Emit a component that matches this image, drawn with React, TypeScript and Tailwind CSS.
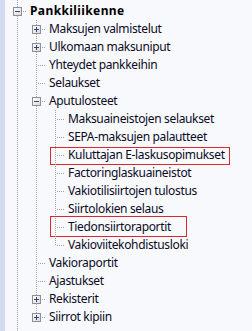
import React from "react";

type Kind = "pipe" | "tee" | "ell" | "blank";
type Row = {
  label: string;
  cells: Kind[];
  box?: "plus" | "minus";
  bold?: boolean;
  mark?: "a" | "b";
};

const rows: Row[] = [
  { label: "Pankkiliikenne", cells: ["tee"], box: "minus", bold: true },
  { label: "Maksujen valmistelut", cells: ["pipe", "tee"], box: "plus" },
  { label: "Ulkomaan maksuniput", cells: ["pipe", "tee"], box: "plus" },
  { label: "Yhteydet pankkeihin", cells: ["pipe", "tee"] },
  { label: "Selaukset", cells: ["pipe", "tee"] },
  { label: "Aputulosteet", cells: ["pipe", "tee"], box: "minus" },
  { label: "Maksuaineistojen selaukset", cells: ["pipe", "pipe", "tee"] },
  { label: "SEPA-maksujen palautteet", cells: ["pipe", "pipe", "tee"] },
  { label: "Kuluttajan E-laskusopimukset", cells: ["pipe", "pipe", "tee"], mark: "a" },
  { label: "Factoringlaskuaineistot", cells: ["pipe", "pipe", "tee"] },
  { label: "Vakiotilisiirtojen tulostus", cells: ["pipe", "pipe", "tee"] },
  { label: "Siirtolokien selaus", cells: ["pipe", "pipe", "tee"] },
  { label: "Tiedonsiirtoraportit", cells: ["pipe", "pipe", "tee"], mark: "b" },
  { label: "Vakioviitekohdistusloki", cells: ["pipe", "pipe", "ell"] },
  { label: "Vakioraportit", cells: ["pipe", "tee"] },
  { label: "Ajastukset", cells: ["pipe", "tee"] },
  { label: "Rekisterit", cells: ["pipe", "tee"], box: "plus" },
  { label: "Siirrot kipiin", cells: ["pipe", "ell"], box: "plus" },
];

const DOT = "#a3a3a3";

function Cell({ kind, box, h = 18 }: { kind: Kind; box?: "plus" | "minus"; h?: number }) {
  return (
    <svg width="19" height={h} className="shrink-0 block" shapeRendering="crispEdges">
      {(kind === "pipe" || kind === "tee") && (
        <line x1="9.5" y1="0" x2="9.5" y2={h} stroke={DOT} strokeDasharray="1 1" />
      )}
      {kind === "ell" && (
        <line x1="9.5" y1="0" x2="9.5" y2="10" stroke={DOT} strokeDasharray="1 1" />
      )}
      {(kind === "tee" || kind === "ell") && (
        <line x1="11" y1="9.5" x2="19" y2="9.5" stroke={DOT} strokeDasharray="1 1" />
      )}
      {box && (
        <g>
          <defs>
            <linearGradient id="bx" x1="0" y1="0" x2="1" y2="1">
              <stop offset="0" stopColor="#ffffff" />
              <stop offset="1" stopColor="#d8d8d8" />
            </linearGradient>
          </defs>
          <rect x="5.5" y="5.5" width="8" height="8" fill="url(#bx)" stroke="#8e8f8f" />
          <line x1="7" y1="9.5" x2="12" y2="9.5" stroke="#2b4a8e" />
          {box === "plus" && <line x1="9.5" y1="7" x2="9.5" y2="12" stroke="#2b4a8e" />}
        </g>
      )}
    </svg>
  );
}

export default function App() {
  return (
    <div
      className="w-[252px] h-[331px] overflow-hidden bg-[#f8f9fd] flex"
      style={{ fontFamily: '"Noto Sans", "Open Sans", sans-serif' }}
    >
      <div className="w-[5px] h-full bg-[#d3daf0] shrink-0" />
      <div className="flex flex-col pl-[3px] flex-1">
        <div className="h-[2px] flex overflow-hidden">
          <Cell kind="pipe" h={2} />
        </div>
        {rows.map((r, i) => (
          <div key={i} className="relative h-[18px] flex items-stretch">
            {r.cells.map((c, j) => (
              <Cell key={j} kind={c} box={j === r.cells.length - 1 ? r.box : undefined} />
            ))}
            <span
              className={
                "pl-[3px] text-[12px] leading-[18px] whitespace-nowrap " +
                (r.bold
                  ? "font-bold text-black tracking-[0.4px]"
                  : "text-[#0b0b1e] tracking-[-0.35px]")
              }
            >
              {r.label}
            </span>
            {r.mark === "a" && (
              <div className="absolute left-[42px] top-[1px] w-[180px] h-[18px] border border-[#e0262b]" />
            )}
            {r.mark === "b" && (
              <div className="absolute left-[42px] top-[-2px] w-[137px] h-[21px] border border-[#e0262b]" />
            )}
          </div>
        ))}
        <div className="h-[5px] flex overflow-hidden">
          <Cell kind="pipe" h={5} />
        </div>
      </div>
    </div>
  );
}
